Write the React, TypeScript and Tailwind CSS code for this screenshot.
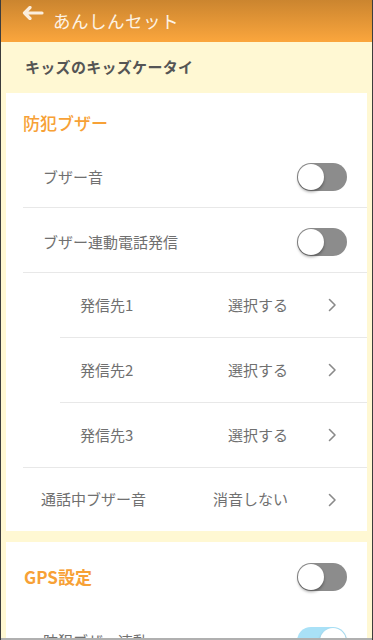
import React from "react";

const font = { fontFamily: '"Noto Sans CJK JP", "Noto Sans", sans-serif' };

function Toggle({ on = false }: { on?: boolean }) {
  return (
    <div
      className={`relative shrink-0 w-[50px] h-[28px] rounded-full ${on ? "bg-[#a9e1f7]" : "bg-[#8c8c8c]"}`}
    >
      <div
        className={`absolute top-[1px] ${on ? "right-[1px]" : "left-[1px]"} w-[26px] h-[26px] rounded-full bg-white shadow-[0_2px_3px_rgba(0,0,0,0.35)]`}
      />
    </div>
  );
}

function Chevron() {
  return (
    <svg width="9" height="14" viewBox="0 0 9 14" className="ml-[40px]">
      <path d="M1.5 1.5 L7 7 L1.5 12.5" fill="none" stroke="#8a8a8a" strokeWidth="1.6" strokeLinecap="round" strokeLinejoin="round" />
    </svg>
  );
}

export default function App() {
  return (
    <div style={font} className="w-[373px] h-[640px] overflow-hidden bg-[#fff8d3] border-x border-[#3c3c3c] flex flex-col">
      <header className="h-[42px] shrink-0 bg-gradient-to-b from-[#cb852f] to-[#fba63d] flex items-center">
        <svg width="22" height="14" viewBox="0 0 22 14" className="ml-[21px] mr-[9px] -mt-[16px]">
          <path d="M8 1.5 L2.5 7 L8 12.5 M2.5 7 H20" fill="none" stroke="#fbeede" strokeWidth="3.2" strokeLinecap="round" strokeLinejoin="round" />
        </svg>
        <span className="text-[17.5px] text-[#fdf3e6] tracking-[0.5px]">あんしんセット</span>
      </header>
      <div className="h-[51px] shrink-0 flex items-center pl-[24px] text-[15px] font-bold text-[#555555] tracking-[0.3px]">
        キッズのキッズケータイ
      </div>
      <div className="mx-[5px] bg-white shrink-0">
        <div className="h-[50px] flex items-center pt-[10px] pl-[17px] text-[17px] font-medium text-[#f7a136]">
          防犯ブザー
        </div>
        <div className="ml-[17px] h-[65px] border-b border-[#e8e8e8] flex items-center justify-between pr-[20px] pt-[4px]">
          <span className="pl-[20px] text-[15px] text-[#707070]">ブザー音</span>
          <Toggle />
        </div>
        <div className="ml-[17px] h-[65px] border-b border-[#e8e8e8] flex items-center justify-between pr-[20px] pt-[4px]">
          <span className="pl-[20px] text-[15px] text-[#707070]">ブザー連動電話発信</span>
          <Toggle />
        </div>
        {["発信先1", "発信先2", "発信先3"].map((t, i) => (
          <div
            key={t}
            className={`h-[65px] border-b border-[#e8e8e8] flex items-center pr-[30px] ${i === 2 ? "ml-[17px] pl-[57px]" : "ml-[54px] pl-[20px]"}`}
          >
            <span className="flex-1 text-[15px] text-[#707070]">{t}</span>
            <span className="text-[15px] text-[#707070]">選択する</span>
            <Chevron />
          </div>
        ))}
        <div className="h-[63px] flex items-center pl-[35px] pr-[30px]">
          <span className="flex-1 text-[15px] text-[#707070]">通話中ブザー音</span>
          <span className="text-[15px] text-[#707070]">消音しない</span>
          <Chevron />
        </div>
      </div>
      <div className="h-[11px] shrink-0" />
      <div className="mx-[5px] bg-white flex-1 min-h-0 overflow-hidden flex flex-col">
        <div className="h-[70px] shrink-0 flex items-center justify-between pl-[18px] pr-[20px]">
          <span className="text-[17px] font-bold text-[#f7a136]">GPS設定</span>
          <Toggle />
        </div>
        <div className="h-[58px] shrink-0 flex items-center justify-between pl-[37px] pr-[20px]">
          <span className="text-[15px] text-[#707070]">防犯ブザー連動</span>
          <Toggle on />
        </div>
      </div>
      <div className="h-[2px] shrink-0 bg-[#b0b0b0]" />
    </div>
  );
}
